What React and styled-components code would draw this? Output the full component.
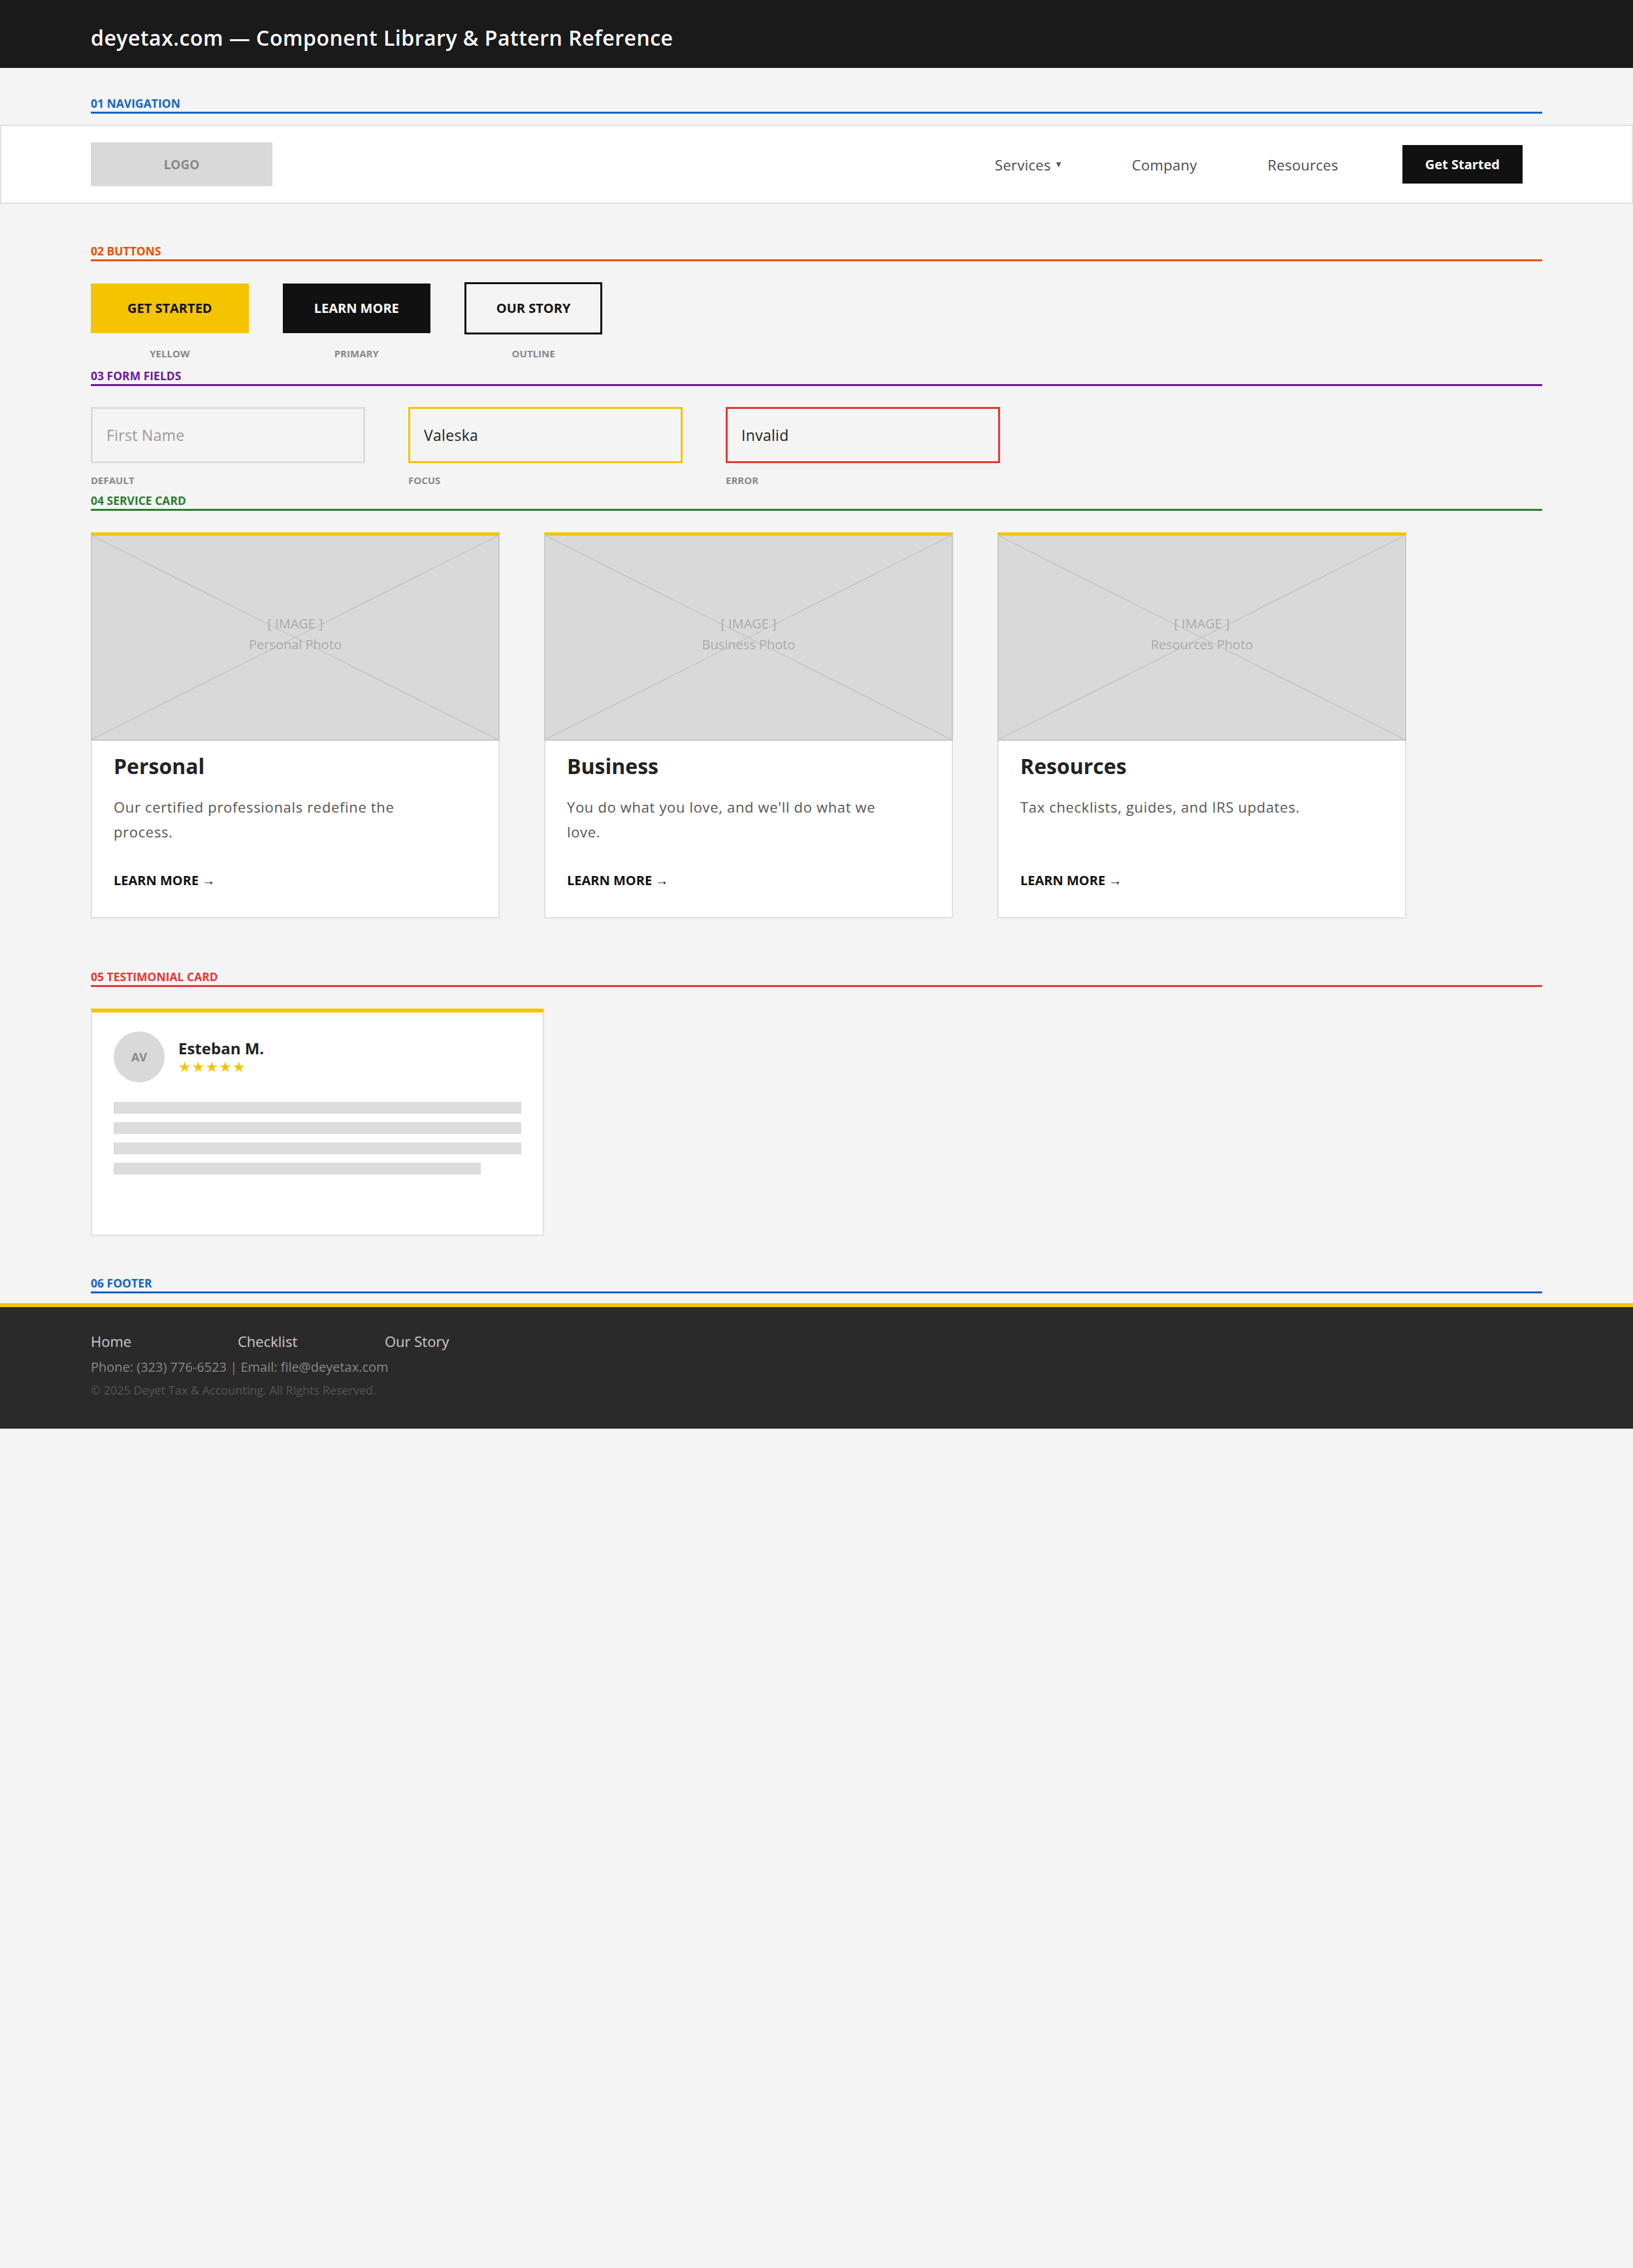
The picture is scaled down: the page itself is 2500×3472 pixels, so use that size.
import React from 'react'
import styled, { createGlobalStyle } from 'styled-components'

const FONT = `"Open Sans", "Liberation Sans", Arial, sans-serif`
const YELLOW = '#f5c400'

const GlobalStyle = createGlobalStyle`
  html, body {
    margin: 0;
    padding: 0;
    background: #f4f4f4;
  }
  body {
    font-family: ${FONT};
    color: #222;
  }
  * {
    box-sizing: border-box;
  }
`

const TopBar = styled.header`
  height: 104px;
  background: #1a1a1a;
  padding: 38px 139px 0;

  h1 {
    margin: 0;
    font-size: 32px;
    line-height: 40px;
    font-weight: 600;
    letter-spacing: 0.5px;
    color: #fff;
  }
`

const SectionHead = styled.div`
  margin: ${p => p.$top}px 139px 0;
  padding-bottom: 2px;
  border-bottom: 3px solid ${p => p.$color};
  color: ${p => p.$color};
  font-size: 17.5px;
  line-height: 22px;
  font-weight: 700;
  text-transform: uppercase;
`

const Block = styled.div`
  margin: ${p => p.$top}px 139px 0;
`

/* 01 navigation */
const NavBar = styled.nav`
  margin-top: 17px;
  height: 121px;
  background: #fff;
  border: 2px solid #e0e0e0;
  display: flex;
  align-items: center;
  justify-content: space-between;
  padding: 0 167px 0 137px;
`

const Logo = styled.div`
  width: 278px;
  height: 67px;
  background: #d9d9d9;
  display: flex;
  align-items: center;
  justify-content: center;
  color: #888;
  font-size: 19px;
  font-weight: 700;
`

const NavMenu = styled.div`
  display: flex;
  align-items: center;
  gap: 108px;
`

const NavLink = styled.a`
  display: flex;
  align-items: center;
  font-size: 22px;
  line-height: 28px;
  letter-spacing: 0.3px;
  color: #4a4a4a;
  text-decoration: none;
`

const Caret = styled.span`
  margin-left: 8px;
  font-family: "DejaVu Sans", sans-serif;
  font-size: 10px;
  color: #555;
`

const NavButton = styled.a`
  margin-left: -10px;
  height: 59px;
  padding: 0 35px;
  display: flex;
  align-items: center;
  background: #111;
  color: #fff;
  font-size: 20px;
  font-weight: 700;
  text-decoration: none;
`

/* 02 buttons */
const ButtonRow = styled.div`
  display: flex;
  align-items: flex-start;
  gap: 52px;
`

const ButtonColumn = styled.div`
  display: flex;
  flex-direction: column;
  align-items: center;
  gap: 22px;
`

const VARIANTS = {
  yellow: `background: ${YELLOW}; color: #111; border: none; padding: 27px 56px;`,
  primary: `background: #111; color: #fff; border: none; padding: 27px 48px;`,
  outline: `background: transparent; color: #111; border: 3px solid #111; padding: 26px 46px; margin: -2px 0;`,
}

const Button = styled.button`
  font-family: inherit;
  font-size: 20px;
  line-height: 22px;
  font-weight: 700;
  cursor: pointer;
  ${p => VARIANTS[p.$variant]}
`

const Caption = styled.div`
  margin-top: ${p => p.$top || 0}px;
  font-size: 15px;
  line-height: 18px;
  font-weight: 700;
  color: #888;
  text-transform: uppercase;
`

/* 03 form fields */
const FieldRow = styled.div`
  display: flex;
  gap: 66px;
`

const FieldColumn = styled.div`
  display: flex;
  flex-direction: column;
`

const Field = styled.input`
  width: 420px;
  height: 86px;
  padding: 0 21px;
  border: 3px solid ${p => p.$border};
  background: #f4f4f4;
  font-family: inherit;
  font-size: 23px;
  letter-spacing: 0.3px;
  color: #222;
  outline: none;

  &::placeholder {
    color: #999;
  }
`

/* 04 service card */
const CardGrid = styled.div`
  display: grid;
  grid-template-columns: repeat(3, 626px);
  gap: 68px;
`

const Card = styled.article`
  display: flex;
  flex-direction: column;
`

const line = dir => `linear-gradient(to ${dir}, transparent calc(50% - 1px), #c3c3c3 calc(50% - 1px), #c3c3c3 calc(50% + 0.5px), transparent calc(50% + 0.5px))`

const CardImage = styled.div`
  height: 319px;
  border: 2px solid #c8c8c8;
  border-top: 5px solid ${YELLOW};
  background: ${line('top right')}, ${line('bottom right')}, #d9d9d9;
  display: flex;
  flex-direction: column;
  align-items: center;
  justify-content: center;
  padding-bottom: 10px;
  color: #aaa;
  font-size: 20px;
  line-height: 32px;
`

const CardBody = styled.div`
  flex: 1;
  display: flex;
  flex-direction: column;
  background: #fff;
  border: 2px solid #e0e0e0;
  border-top: none;
  padding: 20px 33px 44px;
`

const CardTitle = styled.h3`
  margin: 0;
  font-size: 32px;
  line-height: 38px;
  font-weight: 700;
  color: #222;
`

const CardText = styled.p`
  margin: 24px 0 44px;
  max-width: 505px;
  font-size: 22px;
  line-height: 38px;
  letter-spacing: 0.66px;
  color: #555;
`

const CardLink = styled.a`
  margin-top: auto;
  font-size: 20px;
  line-height: 24px;
  font-weight: 700;
  color: #111;
  text-decoration: none;
`

/* 05 testimonial */
const Testimonial = styled.div`
  width: 694px;
  min-height: 348px;
  background: #fff;
  border: 2px solid #e0e0e0;
  border-top: 6px solid ${YELLOW};
  padding: 29px 33px;
`

const Author = styled.div`
  display: flex;
  align-items: center;
  gap: 21px;
`

const Avatar = styled.div`
  width: 78px;
  height: 78px;
  border-radius: 50%;
  background: #d9d9d9;
  display: flex;
  align-items: center;
  justify-content: center;
  color: #888;
  font-size: 18px;
  font-weight: 700;
`

const AuthorInfo = styled.div`
  display: flex;
  flex-direction: column;
  gap: 2px;
`

const AuthorName = styled.div`
  font-size: 24px;
  line-height: 30px;
  font-weight: 700;
  color: #222;
`

const Stars = styled.div`
  font-family: "DejaVu Sans", sans-serif;
  font-size: 22px;
  line-height: 24px;
  letter-spacing: 1px;
  color: ${YELLOW};
`

const Skeleton = styled.div`
  margin-top: 30px;
  display: flex;
  flex-direction: column;
  gap: 13px;
`

const SkeletonLine = styled.div`
  height: 18px;
  width: ${p => p.$width || '100%'};
  background: #dcdcdc;
`

/* 06 footer */
const Footer = styled.footer`
  margin-top: 15px;
  background: #2a2a2a;
  border-top: 6px solid ${YELLOW};
  border-bottom: 1px solid #1a1a1a;
  padding: 38px 139px 46px;
`

const FooterLinks = styled.div`
  display: flex;
`

const FooterLink = styled.a`
  width: 225px;
  font-size: 22px;
  line-height: 28px;
  color: #ccc;
  text-decoration: none;
`

const FooterText = styled.div`
  margin-top: ${p => p.$top}px;
  font-size: ${p => p.$size}px;
  line-height: ${p => p.$size + 6}px;
  color: ${p => p.$color};
`

const buttons = [
  { variant: 'yellow', text: 'GET STARTED', caption: 'Yellow' },
  { variant: 'primary', text: 'LEARN MORE', caption: 'Primary' },
  { variant: 'outline', text: 'OUR STORY', caption: 'Outline' },
]

const fields = [
  { border: '#dddddd', placeholder: 'First Name', caption: 'Default' },
  { border: YELLOW, value: 'Valeska', caption: 'Focus' },
  { border: '#e53935', value: 'Invalid', caption: 'Error' },
]

const services = [
  { title: 'Personal', photo: 'Personal Photo', text: 'Our certified professionals redefine the process.' },
  { title: 'Business', photo: 'Business Photo', text: "You do what you love, and we'll do what we love." },
  { title: 'Resources', photo: 'Resources Photo', text: 'Tax checklists, guides, and IRS updates.' },
]

export default function App() {
  return (
    <>
      <GlobalStyle />
      <TopBar>
        <h1>deyetax.com — Component Library &amp; Pattern Reference</h1>
      </TopBar>

      <SectionHead $top={43} $color="#1565c0">01 Navigation</SectionHead>
      <NavBar>
        <Logo>LOGO</Logo>
        <NavMenu>
          <NavLink href="#">Services<Caret>▼</Caret></NavLink>
          <NavLink href="#">Company</NavLink>
          <NavLink href="#">Resources</NavLink>
          <NavButton href="#">Get Started</NavButton>
        </NavMenu>
      </NavBar>

      <SectionHead $top={61} $color="#e65100">02 Buttons</SectionHead>
      <Block $top={34}>
        <ButtonRow>
          {buttons.map(b => (
            <ButtonColumn key={b.variant}>
              <Button $variant={b.variant}>{b.text}</Button>
              <Caption>{b.caption}</Caption>
            </ButtonColumn>
          ))}
        </ButtonRow>
      </Block>

      <SectionHead $top={14} $color="#6a1b9a">03 Form Fields</SectionHead>
      <Block $top={32}>
        <FieldRow>
          {fields.map(f => (
            <FieldColumn key={f.caption}>
              <Field $border={f.border} placeholder={f.placeholder} defaultValue={f.value} />
              <Caption $top={17}>{f.caption}</Caption>
            </FieldColumn>
          ))}
        </FieldRow>
      </Block>

      <SectionHead $top={11} $color="#2e7d32">04 Service Card</SectionHead>
      <Block $top={33}>
        <CardGrid>
          {services.map(s => (
            <Card key={s.title}>
              <CardImage>
                <div>[ IMAGE ]</div>
                <div>{s.photo}</div>
              </CardImage>
              <CardBody>
                <CardTitle>{s.title}</CardTitle>
                <CardText>{s.text}</CardText>
                <CardLink href="#">LEARN MORE →</CardLink>
              </CardBody>
            </Card>
          ))}
        </CardGrid>
      </Block>

      <SectionHead $top={78} $color="#e53935">05 Testimonial Card</SectionHead>
      <Block $top={33}>
        <Testimonial>
          <Author>
            <Avatar>AV</Avatar>
            <AuthorInfo>
              <AuthorName>Esteban M.</AuthorName>
              <Stars>★★★★★</Stars>
            </AuthorInfo>
          </Author>
          <Skeleton>
            <SkeletonLine />
            <SkeletonLine />
            <SkeletonLine />
            <SkeletonLine $width="90%" />
          </Skeleton>
        </Testimonial>
      </Block>

      <SectionHead $top={61} $color="#1565c0">06 Footer</SectionHead>
      <Footer>
        <FooterLinks>
          <FooterLink href="#">Home</FooterLink>
          <FooterLink href="#">Checklist</FooterLink>
          <FooterLink href="#">Our Story</FooterLink>
        </FooterLinks>
        <FooterText $top={13} $size={20} $color="#888">
          Phone: (323) 776-6523 | Email: file@deyetax.com
        </FooterText>
        <FooterText $top={10} $size={18} $color="#555">
          © 2025 Deyet Tax &amp; Accounting. All Rights Reserved.
        </FooterText>
      </Footer>
    </>
  )
}
